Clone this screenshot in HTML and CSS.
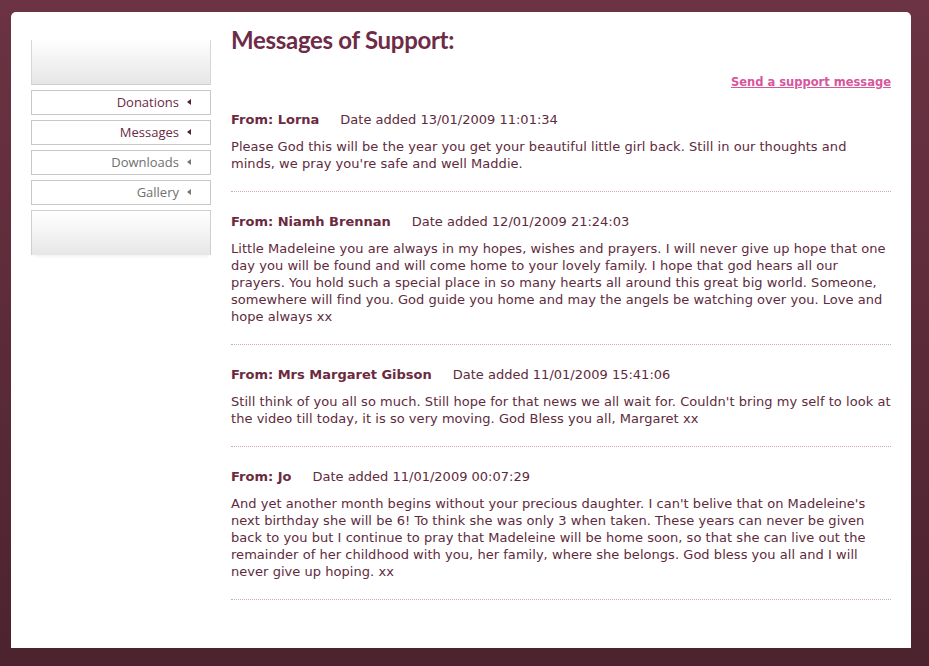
FILE: index.html
```html
<!DOCTYPE html>
<html>
<head>
<meta charset="utf-8">
<title>Messages of Support</title>
<link rel="stylesheet" href="styles.css">
</head>
<body>
<div class="page">
  <aside class="sidebar">
    <div class="cap-top"></div>
    <nav class="nav">
      <a class="nav-item active" href="#">Donations <span class="arrow"></span></a>
      <a class="nav-item active" href="#">Messages <span class="arrow"></span></a>
      <a class="nav-item" href="#">Downloads <span class="arrow"></span></a>
      <a class="nav-item" href="#">Gallery <span class="arrow"></span></a>
    </nav>
    <div class="cap-bottom"></div>
  </aside>
  <main class="content">
    <h1 class="title">Messages of Support:</h1>
    <div class="send-row"><a class="send-link" href="#">Send a support message</a></div>

    <div class="msg">
      <div class="meta"><span class="from">From: Lorna</span><span class="date">Date added 13/01/2009 11:01:34</span></div>
      <p class="body">Please God this will be the year you get your beautiful little girl back. Still in our thoughts and minds, we pray you're safe and well Maddie.</p>
    </div>

    <div class="msg">
      <div class="meta"><span class="from">From: Niamh Brennan</span><span class="date">Date added 12/01/2009 21:24:03</span></div>
      <p class="body">Little Madeleine you are always in my hopes, wishes and prayers. I will never give up hope that one day you will be found and will come home to your lovely family. I hope that god hears all our prayers. You hold such a special place in so many hearts all around this great big world. Someone, somewhere will find you. God guide you home and may the angels be watching over you. Love and hope always xx</p>
    </div>

    <div class="msg">
      <div class="meta"><span class="from">From: Mrs Margaret Gibson</span><span class="date">Date added 11/01/2009 15:41:06</span></div>
      <p class="body">Still think of you all so much. Still hope for that news we all wait for. Couldn't bring my self to look at the video till today, it is so very moving. God Bless you all, Margaret xx</p>
    </div>

    <div class="msg">
      <div class="meta"><span class="from">From: Jo</span><span class="date">Date added 11/01/2009 00:07:29</span></div>
      <p class="body">And yet another month begins without your precious daughter. I can't belive that on Madeleine's next birthday she will be 6! To think she was only 3 when taken. These years can never be given back to you but I continue to pray that Madeleine will be home soon, so that she can live out the remainder of her childhood with you, her family, where she belongs. God bless you all and I will never give up hoping. xx</p>
    </div>
  </main>
</div>
</body>
</html>
```

FILE: styles.css
```css
html, body {
  margin: 0;
  padding: 0;
}
body {
  width: 929px;
  height: 666px;
  overflow: hidden;
  background: linear-gradient(to bottom, #6b3343 0%, #5c2b39 50%, #4b232e 100%);
}
.page {
  margin: 12px 0 0 11px;
  width: 860px;
  height: 636px;
  padding: 0 20px;
  background: #fff;
  border-radius: 5px 5px 0 0;
  display: flex;
  gap: 20px;
}
.sidebar {
  width: 180px;
  flex: none;
  padding-top: 28px;
}
.cap-top {
  height: 44px;
  background: linear-gradient(to bottom, #ffffff 0%, #f3f3f3 45%, #e6e6e6 100%);
  border: 1px solid #cfcfcf;
  border-top: none;
  border-left-color: #d6d6d6;
  border-right-color: #d6d6d6;
}
.nav {
  display: flex;
  flex-direction: column;
  gap: 5px;
  margin-top: 5px;
}
.nav-item {
  box-sizing: border-box;
  height: 25px;
  border: 1px solid #c8c8c8;
  display: flex;
  align-items: center;
  justify-content: flex-end;
  gap: 8px;
  padding-right: 19px;
  padding-bottom: 1px;
  font-family: "Open Sans", "Lato", sans-serif;
  font-size: 13px;
  color: #6f6f6f;
  text-decoration: none;
  background: #fff;
}
.nav-item.active {
  color: #6a2a45;
}
.arrow {
  width: 0;
  height: 0;
  border-top: 3.5px solid transparent;
  border-bottom: 3.5px solid transparent;
  border-right: 4px solid #777;
}
.nav-item.active .arrow {
  border-right-color: #4e2234;
}
.cap-bottom {
  margin-top: 5px;
  height: 44px;
  border: 1px solid #cfcfcf;
  border-bottom: none;
  background: linear-gradient(to bottom, #ffffff 0%, #f6f6f6 40%, #e6e6e6 100%);
  box-shadow: 0 4px 4px -3px rgba(0,0,0,0.08);
}
.content {
  flex: 1;
  padding-top: 14px;
  font-family: "DejaVu Sans", Verdana, sans-serif;
  font-size: 13px;
  color: #5e2b3d;
}
.title {
  margin: 0;
  font-family: "Lato", "Open Sans", sans-serif;
  font-weight: 700;
  font-size: 24px;
  line-height: 28px;
  letter-spacing: -0.3px;
  color: #6e2b48;
}
.send-row {
  margin-top: 19px;
  text-align: right;
  line-height: 17px;
}
.send-link {
  font-weight: bold;
  font-size: 11.5px;
  color: #d8569c;
  text-decoration: underline;
}
.msg {
  margin-top: 20px;
  border-bottom: 1px dotted #c9aab4;
  padding-bottom: 19px;
}
.msg + .msg {
  margin-top: 21px;
}
.meta {
  line-height: 17px;
  display: flex;
  gap: 21px;
}
.from {
  font-weight: bold;
  color: #6b2a40;
}
.body {
  margin: 10px 0 0;
  line-height: 17px;
  letter-spacing: 0.04px;
}
```
